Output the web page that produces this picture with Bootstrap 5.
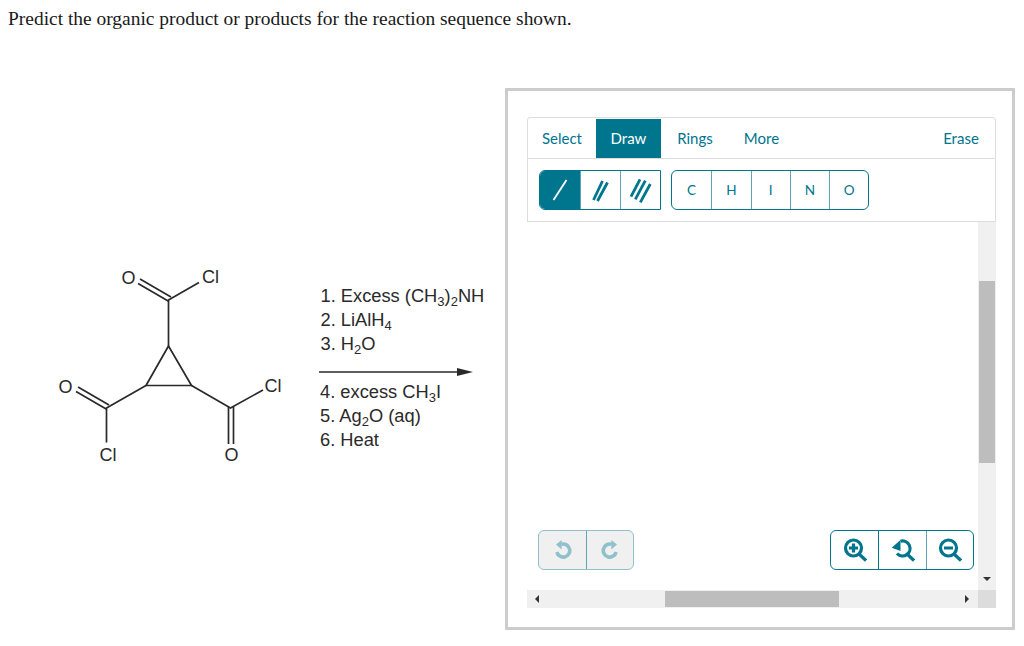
<!DOCTYPE html>
<html lang="en">
<head>
    <meta charset="UTF-8">
    <title>Organic product question</title>
    <link href="https://cdn.jsdelivr.net/npm/bootstrap@5.3.0/dist/css/bootstrap.min.css" rel="stylesheet">
    <style>
        body { background: #fff; overflow: hidden; }
        .question-text { font-family: "Liberation Serif", serif; font-size: 19.45px; line-height: 22px; color: #1a1a1a; padding: 8px 0 0 8px; margin: 0; height: 88px; }
        .scheme-box { width: 505px; height: 542px; flex: none; }
        .scheme-box svg { display: block; }
        .scheme-box text { font-family: "Liberation Sans", sans-serif; fill: #2a2a2a; }
        .atom-label { font-size: 18px; text-anchor: middle; }
        .step-label { font-size: 18.3px; }
        .sub-label { font-size: 13px; }
        .sketch-frame { width: 510px; height: 542px; border: 3px solid #ccc; padding: 26px 0 0 19px; flex: none; font-family: Lato, sans-serif; }
        .sketch-inner { width: 469px; }
        .tool-tabs { height: 42px; border: 1px solid #ddd; border-radius: 3px 3px 0 0; font-size: 15px; color: #00758e; padding: 1px 0 0 0; }
        .tool-tab { height: 39px; display: flex; align-items: center; justify-content: center; }
        .tab-select { width: 68px; }
        .tab-draw { width: 65px; background: #00758e; color: #fff; }
        .tab-rings { width: 68px; }
        .tab-more { width: 65px; }
        .tab-erase { margin-left: auto; width: 68px; }
        .tool-row { height: 63px; border: 1px solid #ddd; border-top: 0; padding: 11px; gap: 10px; }
        .sk-group { display: flex; height: 40px; border: 1px solid #00758e; border-radius: 6px; overflow: hidden; background: #fff; }
        .sk-cell { display: flex; align-items: center; justify-content: center; color: #00758e; font-size: 13.5px; border-left: 1px solid #5fa5b5; }
        .sk-cell:first-child { border-left: 0; }
        .bond-group { border-radius: 6px 0 0 6px; }
        .bond-cell { width: 40px; }
        .bond-cell.is-on { background: #00758e; }
        .atom-cell { width: 39.25px; }
        .sk-canvas { width: 451px; height: 368px; padding: 0 4px 20px 11px; }
        .sk-group.is-off { border-color: #8fc0cc; background: #f0f0f0; }
        .undo-cell { width: 47px; }
        .zoom-cell { width: 47.33px; }
        .zoom-cell:nth-child(2) { border-left-color: #00758e; }
        .v-scroll { width: 18px; height: 368px; background: #f0f0f0; padding-top: 59px; }
        .v-thumb { width: 16px; height: 182px; margin: 0 auto; background: #bdbdbd; }
        .v-arrow { width: 0; height: 0; margin: 114px auto 0; border: 4px solid transparent; border-top: 4px solid #333; border-bottom: 0; }
        .h-scroll { width: 451px; height: 18px; background: #f0f0f0; padding: 0 8px; }
        .h-thumb { width: 174px; height: 16px; background: #bdbdbd; margin-left: 126px; }
        .h-arrow-l { width: 0; height: 0; border: 4px solid transparent; border-right: 4px solid #333; border-left: 0; }
        .h-arrow-r { width: 0; height: 0; border: 4px solid transparent; border-left: 4px solid #333; border-right: 0; margin-left: auto; margin-right: 1px; }
        .scroll-corner { width: 18px; height: 18px; background: #dcdcdc; }
    </style>
</head>
<body>

<!-- Question -->
<p class="question-text">Predict the organic product or products for the reaction sequence shown.</p>

<div class="d-flex">
    <!-- Reaction scheme, coordinates are page x and y - 88 -->
    <div class="scheme-box">
        <svg width="505" height="542" viewBox="0 88 505 542">
            <g stroke="#2a2a2a" stroke-width="1.7" fill="none">
                <path d="M168.5 346 L146 385.5 L191.5 385.5 Z"/>
                <path d="M168.5 346 V300 L199 282.5"/>
                <path d="M169 301.5 L138 283.5 M171 297 L140 279"/>
                <path d="M146 385.5 L106.5 408 V442.5"/>
                <path d="M107 409.5 L76 391.5 M109 405 L78 387"/>
                <path d="M191.5 385.5 L230.5 408 L263 390"/>
                <path d="M228.5 407 V444 M233.5 407 V444"/>
            </g>
            <text class="atom-label" x="128.5" y="283.5">O</text>
            <text class="atom-label" x="210.5" y="283">Cl</text>
            <text class="atom-label" x="65.5" y="392.5">O</text>
            <text class="atom-label" x="108" y="460.5">Cl</text>
            <text class="atom-label" x="231.5" y="460.5">O</text>
            <text class="atom-label" x="273" y="391.5">Cl</text>

            <text class="step-label" x="320.5" y="302">1. Excess (CH<tspan class="sub-label" dy="4">3</tspan><tspan dy="-4">)</tspan><tspan class="sub-label" dy="4">2</tspan><tspan dy="-4">NH</tspan></text>
            <text class="step-label" x="320.5" y="326">2. LiAlH<tspan class="sub-label" dy="4">4</tspan></text>
            <text class="step-label" x="320.5" y="350">3. H<tspan class="sub-label" dy="4">2</tspan><tspan dy="-4">O</tspan></text>
            <path d="M319 372 H460" stroke="#2a2a2a" stroke-width="1.7"/>
            <path d="M457 368 L473 372 L457 376 Z" fill="#2a2a2a"/>
            <text class="step-label" x="320" y="398">4. excess CH<tspan class="sub-label" dy="4">3</tspan><tspan dy="-4">I</tspan></text>
            <text class="step-label" x="320" y="422">5. Ag<tspan class="sub-label" dy="4">2</tspan><tspan dy="-4">O (aq)</tspan></text>
            <text class="step-label" x="320" y="446">6. Heat</text>
        </svg>
    </div>

    <!-- Sketcher widget -->
    <div class="sketch-frame">
        <div class="sketch-inner">
            <div class="tool-tabs d-flex">
                <div class="tool-tab tab-select">Select</div>
                <div class="tool-tab tab-draw">Draw</div>
                <div class="tool-tab tab-rings">Rings</div>
                <div class="tool-tab tab-more">More</div>
                <div class="tool-tab tab-erase">Erase</div>
            </div>
            <div class="tool-row d-flex">
                <div class="sk-group bond-group">
                    <div class="sk-cell bond-cell is-on">
                        <svg width="16" height="22" viewBox="0 0 16 22"><path d="M1.5 21 L14.5 1" stroke="#fff" stroke-width="1.8"/></svg>
                    </div>
                    <div class="sk-cell bond-cell">
                        <svg width="18" height="24" viewBox="0 0 18 24"><path d="M1.5 22 L10.5 3 M5.5 23 L15.5 4.5" stroke="#00758e" stroke-width="2.8"/></svg>
                    </div>
                    <div class="sk-cell bond-cell">
                        <svg width="24" height="26" viewBox="0 0 24 26"><path d="M2 19.7 L11 2.3 M6.3 22.3 L16.3 3.7 M11.3 25.3 L21.3 7" stroke="#00758e" stroke-width="2.8"/></svg>
                    </div>
                </div>
                <div class="sk-group">
                    <div class="sk-cell atom-cell">C</div>
                    <div class="sk-cell atom-cell">H</div>
                    <div class="sk-cell atom-cell">I</div>
                    <div class="sk-cell atom-cell">N</div>
                    <div class="sk-cell atom-cell">O</div>
                </div>
            </div>
            <div class="d-flex">
                <div class="sk-canvas d-flex justify-content-between align-items-end">
                    <div class="sk-group is-off">
                        <div class="sk-cell undo-cell">
                            <svg width="18" height="20" viewBox="0 0 18 20"><path d="M7.5 4.3 A6.5 6.5 0 1 1 2.9 12" stroke="#8fc0cc" stroke-width="3.6" fill="none"/><path d="M7.7 0 V9.5 L2 4.5 Z" fill="#8fc0cc"/></svg>
                        </div>
                        <div class="sk-cell undo-cell">
                            <svg width="18" height="20" viewBox="0 0 18 20"><path d="M10.5 4.3 A6.5 6.5 0 1 0 15.1 12" stroke="#8fc0cc" stroke-width="3.6" fill="none"/><path d="M10.3 0 V9.5 L16 4.5 Z" fill="#8fc0cc"/></svg>
                        </div>
                    </div>
                    <div class="sk-group">
                        <div class="sk-cell zoom-cell">
                            <svg width="24" height="24" viewBox="0 0 24 24"><circle cx="10.5" cy="10" r="8" stroke="#00758e" stroke-width="3.2" fill="none"/><path d="M16 16 L23 22.5" stroke="#00758e" stroke-width="3.2"/><path d="M6 10 H15 M10.5 5.5 V14.5" stroke="#00758e" stroke-width="3.2"/></svg>
                        </div>
                        <div class="sk-cell zoom-cell">
                            <svg width="24" height="24" viewBox="0 0 24 24"><path d="M9.5 3.2 A7.5 7.5 0 1 1 6 15.5" stroke="#00758e" stroke-width="3.2" fill="none"/><path d="M9.5 2 V13 L0.7 9.7 Z" fill="#00758e"/><path d="M16 16 L23 22.5" stroke="#00758e" stroke-width="3.2"/></svg>
                        </div>
                        <div class="sk-cell zoom-cell">
                            <svg width="24" height="24" viewBox="0 0 24 24"><circle cx="10.5" cy="10" r="8" stroke="#00758e" stroke-width="3.2" fill="none"/><path d="M16 16 L23 22.5" stroke="#00758e" stroke-width="3.2"/><path d="M6 10 H15" stroke="#00758e" stroke-width="3.2"/></svg>
                        </div>
                    </div>
                </div>
                <div class="v-scroll">
                    <div class="v-thumb"></div>
                    <div class="v-arrow"></div>
                </div>
            </div>
            <div class="d-flex">
                <div class="h-scroll d-flex align-items-center">
                    <div class="h-arrow-l"></div>
                    <div class="h-thumb"></div>
                    <div class="h-arrow-r"></div>
                </div>
                <div class="scroll-corner"></div>
            </div>
        </div>
    </div>
</div>

<script src="https://cdn.jsdelivr.net/npm/bootstrap@5.3.0/dist/js/bootstrap.bundle.min.js"></script>
</body>
</html>
